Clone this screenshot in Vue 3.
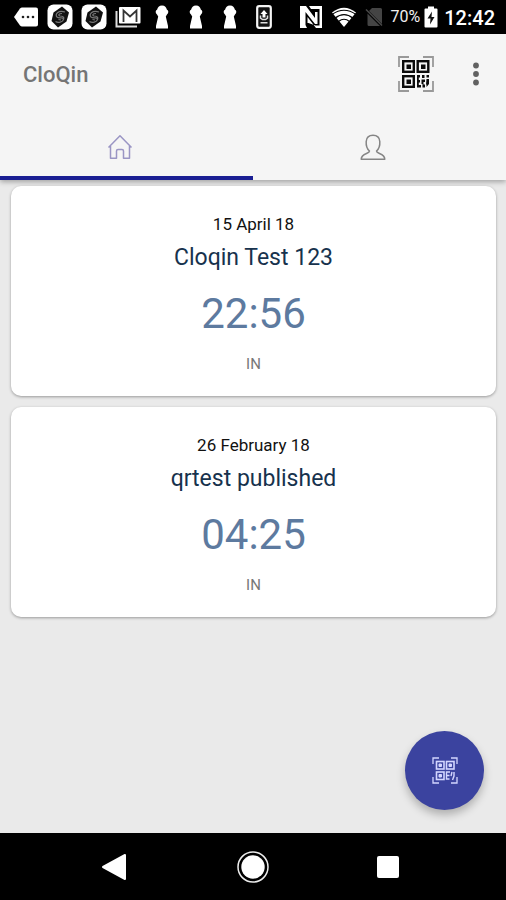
<script setup>
import { ref } from 'vue'

const tab = ref('home')
const entries = [
  { date: '15 April 18', name: 'Cloqin Test 123', time: '22:56', state: 'IN' },
  { date: '26 February 18', name: 'qrtest published', time: '04:25', state: 'IN' },
]
</script>

<template>
  <div class="screen">
    <svg class="defs" aria-hidden="true">
      <symbol id="rotate-badge" viewBox="0 0 26 26">
        <rect x="0.5" y="0.5" width="25" height="25" rx="6" fill="#fff" />
        <path d="M15 2.500L22 8.500L19.500 17.500L11 23.500L4.500 17L6.500 8.500Z" fill="#111" />
        <path d="M18 8C11 6 7.500 10.500 10 13C12.500 15 16 12.500 16.500 15C16 18.500 11 19 8.500 17.500M15 9.500C11.500 9.500 11 11.500 13 12C17 12 18 14 15.500 17M11.500 15.500L14 16" fill="none" stroke="#777" stroke-width="1.200" />
      </symbol>
      <symbol id="keyhole" viewBox="0 0 14 24">
        <path d="M7 0.500C10 0.500 11.300 2.200 11.800 4.500C13.800 5.500 13.800 8 12 9.500L10.800 11.500L13 21V23.500H1V21L3.200 11.500L2 9.500C0.200 8 0.200 5.500 2.200 4.500C2.700 2.200 4 0.500 7 0.500Z" fill="#fff" />
      </symbol>
    </svg>

    <header class="status">
      <div class="notices">
        <span class="cell">
          <svg width="26" height="22" viewBox="0 0 26 22"><path d="M1 11L7 2.500Q8 1.500 9 1.500H23Q25 1.500 25 3.500V18.500Q25 20.500 23 20.500H9Q8 20.500 7 19.500Z" fill="#fff" /><g fill="#222"><circle cx="10" cy="11" r="1.300" /><circle cx="15" cy="11" r="1.300" /><circle cx="20" cy="11" r="1.300" /></g></svg>
        </span>
        <span v-for="n in 2" :key="'b' + n" class="cell"><svg width="26" height="26"><use href="#rotate-badge" /></svg></span>
        <span class="cell">
          <svg width="26" height="22" viewBox="0 0 26 22"><path d="M1.500 5V20.500H22" fill="none" stroke="#ddd" stroke-width="2" /><rect x="4" y="1" width="21.500" height="16.500" rx="1" fill="#fff" /><path d="M8.500 16V4.500L15 10.500L21.500 4.500V16" fill="none" stroke="#333" stroke-width="1.800" /></svg>
        </span>
        <span v-for="n in 3" :key="'k' + n" class="cell"><svg width="14" height="24"><use href="#keyhole" /></svg></span>
        <span class="cell">
          <svg width="16" height="24" viewBox="0 0 16 24"><rect x="1.200" y="1.200" width="13.600" height="21.600" rx="2" fill="#111" stroke="#f4f4f4" stroke-width="2.200" /><path d="M8 5L11.500 9H9.500V12.500H6.500V9H4.500Z" fill="#fff" /><path d="M4.500 10.500V13L6.500 14.500H9.500L11.500 13V10.500M4.500 17.800H11.500" fill="none" stroke="#ddd" stroke-width="1.500" /></svg>
        </span>
      </div>
      <div class="system">
        <svg width="24" height="24" viewBox="0 0 24 24"><path d="M1 1H7L16 13V7H18.500V19H16L6.500 7V20L8 23H1Z" fill="#fff" /><path d="M10 1H23V23H17L8.500 12V18H9.500L16.500 20.500H20.500V4H12Z" fill="#fff" /></svg>
        <svg width="26" height="20" viewBox="0 0 26 20"><path d="M1 5.500Q13 -4 25 5.500L13 20Z" fill="#fff" /><path d="M1 7.500Q13 -1 25 7.500M4 11.200Q13 4 22 11.200M7.500 14.500Q13 10 18.500 14.500" fill="none" stroke="#000" stroke-width="1.100" /></svg>
        <svg width="18" height="20" viewBox="0 0 18 20"><path d="M7 1H15.500Q17 1 17 2.500V17L4 4ZM2.500 6.500L15 19H4Q2.500 19 2.500 17.500Z" fill="#444" /><path d="M1 2.500L17 18.500" stroke="#4a4a4a" stroke-width="1.500" /></svg>
        <span class="percent">70%</span>
        <svg class="battery" width="14" height="22" viewBox="0 0 14 22"><path d="M4 0.500H10V2.500H12.500Q13.500 2.500 13.500 3.500V20.500Q13.500 21.500 12.500 21.500H1.500Q0.500 21.500 0.500 20.500V3.500Q0.500 2.500 1.500 2.500H4Z" fill="#fff" /><path d="M8 5.500L3.500 12.500H6.500L6 18.500L10.500 11H7.500Z" fill="#111" /></svg>
        <span class="clock">12:42</span>
      </div>
    </header>

    <div class="appbar">
      <div class="toolbar">
        <h1>CloQin</h1>
        <button class="icon scan" aria-label="Scan code">
          <svg width="36" height="36" viewBox="0 0 36 36" fill="none">
            <path d="M1 11V1H11M25 1H35V11M35 25V35H25M11 35H1V25" stroke="#999" stroke-width="1.800" />
            <g stroke="#0b0b0b" stroke-width="2.400"><rect x="5.200" y="5.200" width="10.600" height="10.600" /><rect x="19.700" y="5.200" width="10.600" height="10.600" /><rect x="5.200" y="20.200" width="10.600" height="10.600" /></g>
            <path d="M8.500 8.500H13V13H8.500ZM23 8.500H27.500V13H23ZM8.500 23.500H13V28H8.500Z" fill="#0b0b0b" />
            <path d="M19 19H22V21.500H20.800V24H22V26.500H20.800V29H23V31.500H19ZM24 19H26.500V22H24ZM28.500 19H31V21.500H28.500ZM23.500 23.500H27V26H25.500V28.500H27V31.500H24.500V28H23.500ZM28.500 23H31V28L28.500 31V28.500H28Z" fill="#0b0b0b" />
          </svg>
        </button>
        <button class="icon more" aria-label="More options">
          <svg width="8" height="24" viewBox="0 0 8 24" fill="#616161"><circle cx="4" cy="3.500" r="2.900" /><circle cx="4" cy="12" r="2.900" /><circle cx="4" cy="20.500" r="2.900" /></svg>
        </button>
      </div>
      <nav class="tabs" role="tablist">
        <button role="tab" aria-label="Home" :aria-selected="tab === 'home'" :class="{ active: tab === 'home' }" @click="tab = 'home'">
          <svg width="26" height="26" viewBox="0 0 26 26" fill="none" stroke="#9a95c4" stroke-width="1.500" stroke-linejoin="round"><path d="M1.500 13.500L13 1.800L24.500 13.500M3.500 12V24.200H9.500V17Q9.500 15.500 11 15.500H15Q16.500 15.500 16.500 17V24.200H22.500V12" /></svg>
        </button>
        <button role="tab" aria-label="Profile" :aria-selected="tab === 'profile'" :class="{ active: tab === 'profile' }" @click="tab = 'profile'">
          <svg width="26" height="28" viewBox="0 0 26 28" fill="none" stroke="#858585" stroke-width="1.500" stroke-linejoin="round"><path d="M9.500 18C6.500 15.500 6 11.500 6.200 8.500C6.500 4.500 9 2.300 13 2.300S19.500 4.500 19.800 8.500C20 11.500 19.500 15.500 16.500 18C16.500 21 24.800 20 24.800 26.300H1.200C1.200 20 9.500 21 9.500 18Z" /></svg>
        </button>
      </nav>
    </div>

    <main>
      <article v-for="e in entries" :key="e.name" class="card">
        <p class="date">{{ e.date }}</p>
        <h2>{{ e.name }}</h2>
        <p class="time">{{ e.time }}</p>
        <p class="state">{{ e.state }}</p>
      </article>
      <button class="fab" aria-label="Scan a code">
        <svg width="26" height="27" viewBox="0 0 26 27" fill="none" stroke="#d3d6ff">
          <path d="M1 7V1H7M19 1H25V7M25 20V26H19M7 26H1V20" stroke-width="1.300" />
          <g stroke-width="1.600"><rect x="4.500" y="4.500" width="7.500" height="7.500" /><rect x="14.500" y="4.500" width="7.500" height="7.500" /><rect x="4.500" y="15" width="7.500" height="7.500" /></g>
          <path d="M7 7H9.500V9.500H7ZM17 7H19.500V9.500H17ZM7 17.500H9.500V20H7Z" fill="#d3d6ff" />
          <path d="M18 15H14.500V22H17.500M14.500 18.500H17.500M20 15L19 19M22 15V19L20.500 23" stroke-width="1.400" />
        </svg>
      </button>
    </main>

    <footer class="navbar">
      <button aria-label="Back"><svg width="34" height="28" viewBox="0 0 34 28"><path d="M2 14L24 2V26Z" fill="#fff" stroke="#fff" stroke-width="2" stroke-linejoin="round" /></svg></button>
      <button aria-label="Home screen"><svg width="32" height="32" viewBox="0 0 32 32"><circle cx="16" cy="16" r="15" fill="none" stroke="#eee" stroke-width="1.500" /><circle cx="16" cy="16" r="11.700" fill="#fff" /></svg></button>
      <button aria-label="Recent apps"><svg width="24" height="24" viewBox="0 0 24 24"><rect x="1" y="1" width="22" height="22" rx="2" fill="#fff" /></svg></button>
    </footer>
  </div>
</template>

<style>
body {
  margin: 0;
  background: #eaeaea;
}
</style>

<style scoped>
.screen {
  min-height: 100vh;
  display: flex;
  flex-direction: column;
  background: #eaeaea;
  font-family: Roboto, "Liberation Sans", sans-serif;
}
.defs {
  display: none;
}
svg {
  display: block;
  flex: none;
}
button {
  display: flex;
  align-items: center;
  justify-content: center;
  padding: 0;
  border: 0;
  background: none;
  cursor: pointer;
}
h1,
h2,
p {
  margin: 0;
  font-weight: 400;
}
.status {
  height: 34px;
  display: flex;
  align-items: center;
  justify-content: space-between;
  padding: 0 11px 0 9px;
  background: #000;
  color: #fff;
}
.notices {
  display: flex;
}
.cell {
  width: 34px;
  display: flex;
  align-items: center;
  justify-content: center;
}
.system {
  display: flex;
  align-items: center;
  gap: 8px;
}
.percent {
  font-size: 16px;
  line-height: 20px;
  color: #f0f0f0;
}
.battery {
  margin-left: -4px;
}
.clock {
  font-size: 20px;
  line-height: 20px;
  font-weight: 500;
  margin-left: -2px;
  padding-top: 2px;
}
.appbar {
  position: relative;
  background: #f5f5f5;
  box-shadow: 0 2px 5px rgba(0, 0, 0, 0.3);
}
.toolbar {
  height: 80px;
  display: flex;
  align-items: center;
  padding: 0 20px 0 23px;
}
h1 {
  flex: 1;
  font-size: 22px;
  font-weight: 500;
  color: #757575;
}
.icon {
  height: 48px;
}
.scan {
  width: 48px;
}
.more {
  width: 20px;
  margin-left: 26px;
}
.tabs {
  display: grid;
  grid-template-columns: 1fr 1fr;
}
.tabs button {
  height: 66px;
  padding-top: 4px;
  padding-right: 14px;
  border-bottom: 4px solid transparent;
}
.tabs .active {
  border-bottom-color: #1a1e93;
}
main {
  position: relative;
  flex: 1;
  display: flex;
  flex-direction: column;
  gap: 11px;
  padding: 6px 10px 24px 11px;
}
.card {
  padding: 26px 16px 22px;
  border-radius: 10px;
  background: #fff;
  box-shadow: 0 1px 3px rgba(0, 0, 0, 0.35);
  text-align: center;
}
.date {
  font-size: 17px;
  line-height: 24px;
  color: #111;
}
h2 {
  margin-top: 8px;
  font-size: 23px;
  line-height: 28px;
  color: #17324d;
}
.time {
  margin-top: 16px;
  font-size: 42px;
  line-height: 52px;
  color: #5d7a9f;
}
.state {
  margin-top: 14px;
  font-size: 15px;
  line-height: 20px;
  color: #777;
}
.fab {
  position: absolute;
  right: 22px;
  bottom: 23px;
  width: 79px;
  height: 79px;
  border-radius: 50%;
  background: #3b439f;
  box-shadow: 0 5px 9px rgba(0, 0, 0, 0.25);
}
.navbar {
  height: 67px;
  display: flex;
  align-items: center;
  justify-content: center;
  gap: 87px;
  background: #000;
}
.navbar button {
  width: 48px;
  height: 48px;
}
</style>
